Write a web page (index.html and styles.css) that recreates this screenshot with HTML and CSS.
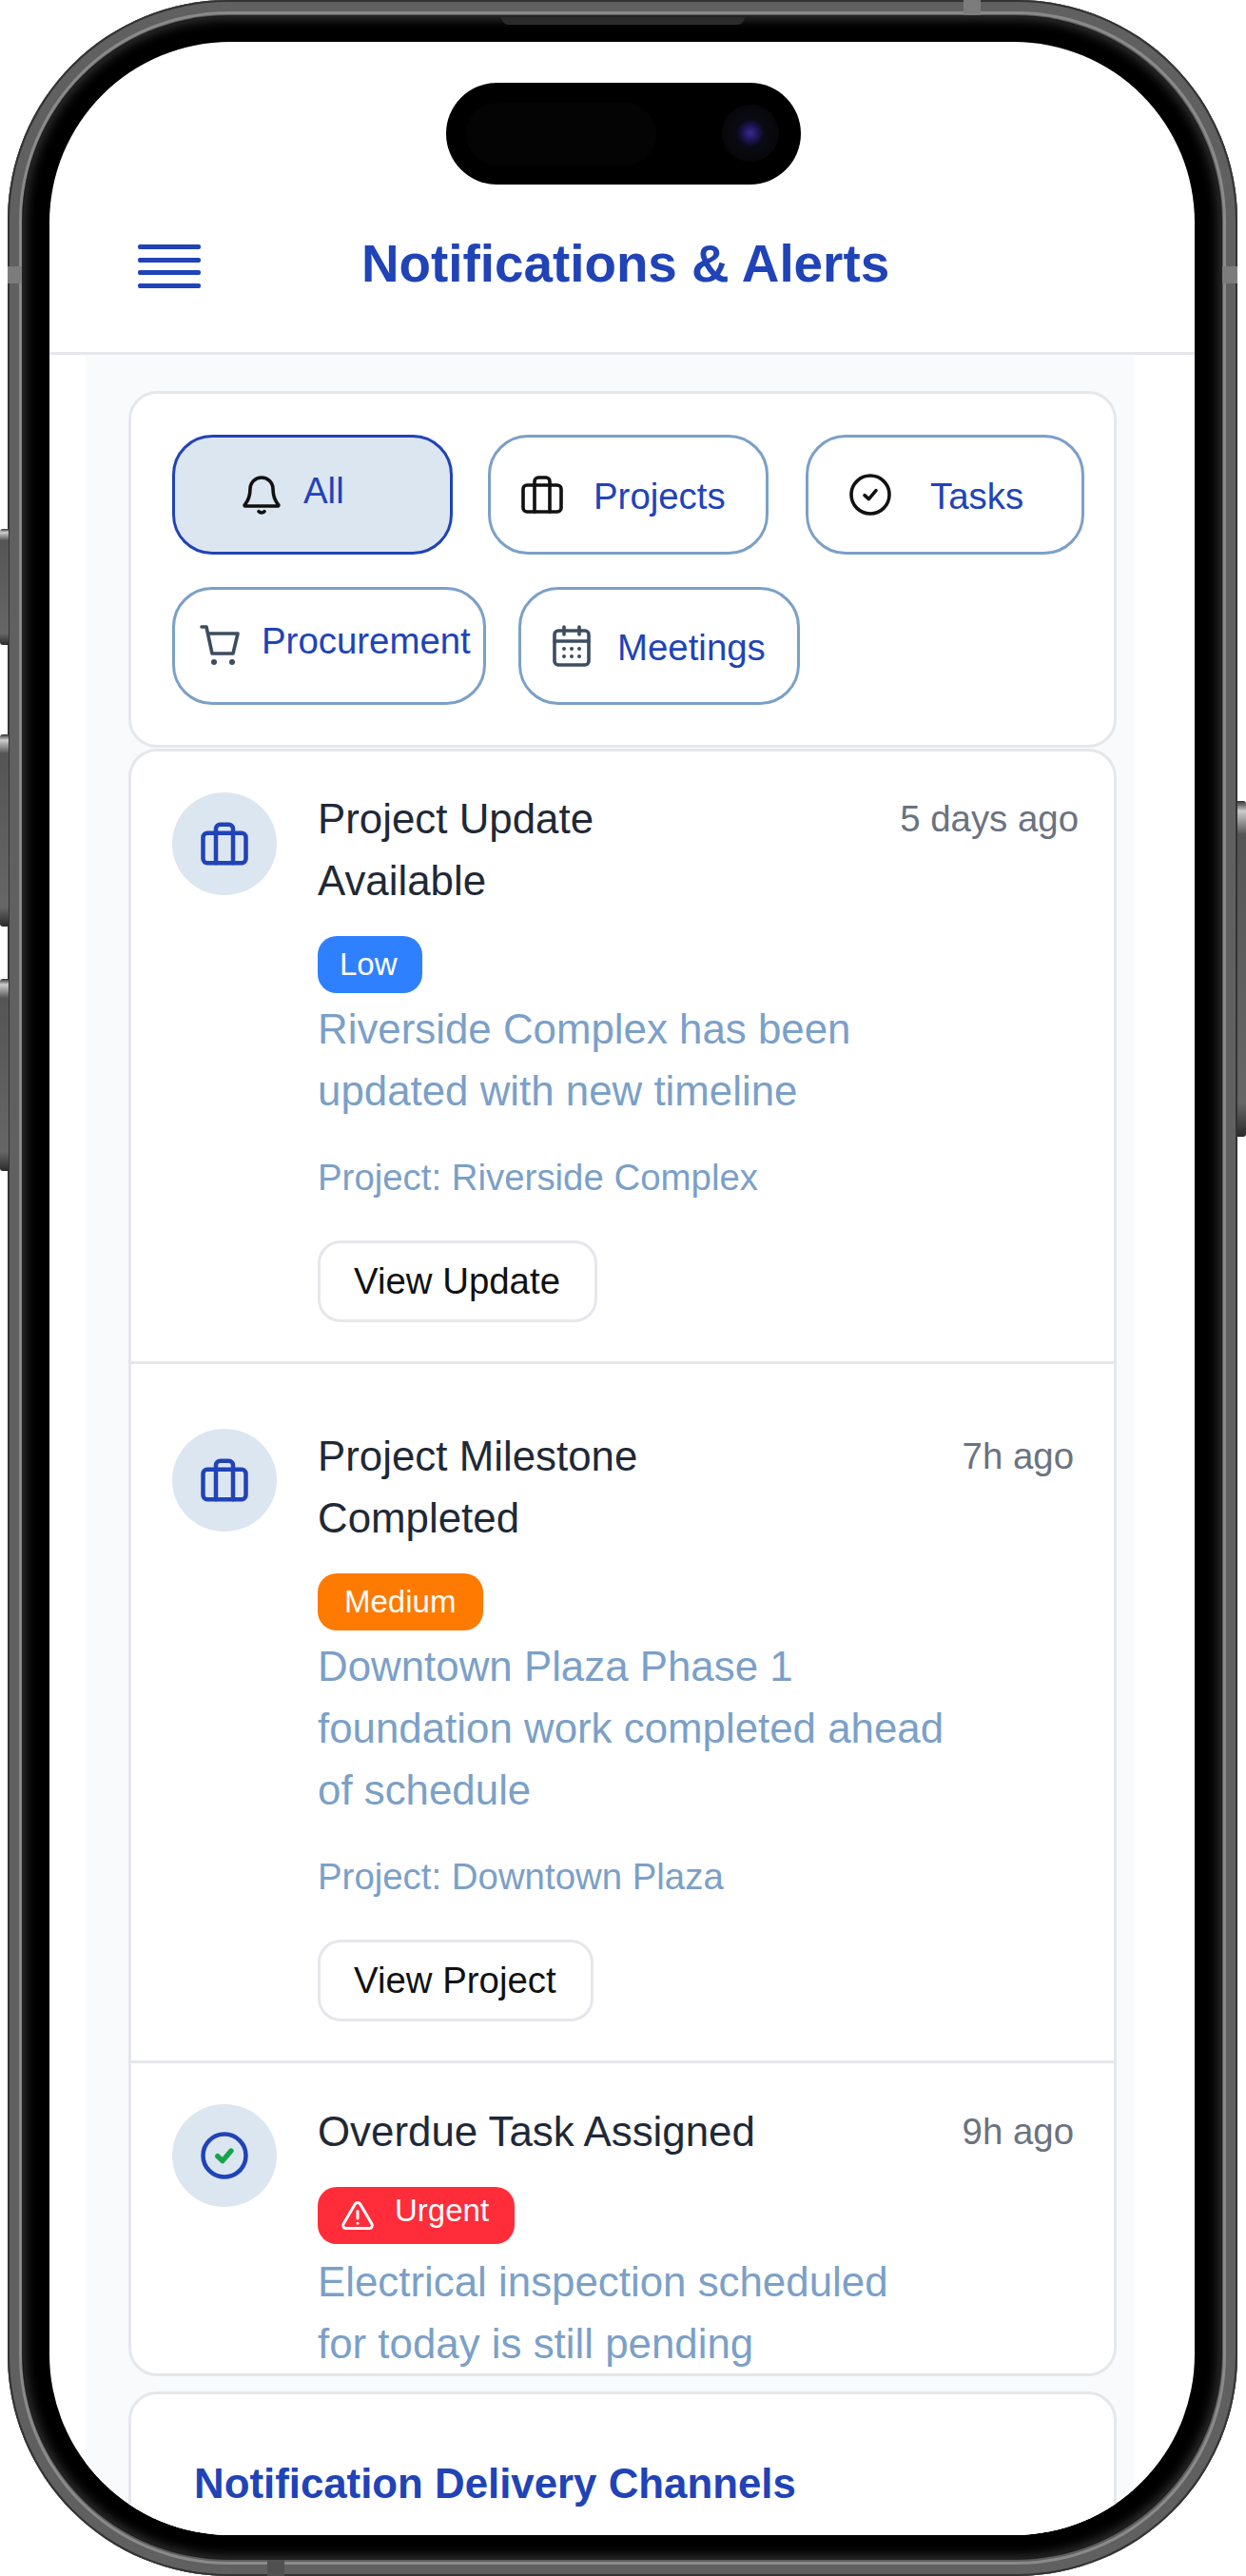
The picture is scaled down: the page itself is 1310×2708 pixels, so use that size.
FILE: index.html
```html
<!DOCTYPE html>
<html lang="en">
<head>
  <meta charset="UTF-8">
  <title>Notifications &amp; Alerts</title>
  <link rel="stylesheet" href="styles.css">
</head>
<body>
  <div class="phone">
    <span class="side-btn side-btn-mute"></span>
    <span class="side-btn side-btn-up"></span>
    <span class="side-btn side-btn-down"></span>
    <span class="side-btn side-btn-power"></span>
    <span class="band band-top"></span>
    <span class="band band-left"></span>
    <span class="band band-right"></span>
    <span class="band band-bottom"></span>

    <div class="bezel">
      <span class="speaker"></span>
      <div class="screen">
        <div class="island">
          <span class="island-sensor"></span>
          <span class="island-camera"></span>
        </div>

        <header class="app-header">
          <div class="hamburger"><span></span><span></span><span></span><span></span></div>
          <h1>Notifications &amp; Alerts</h1>
        </header>

        <main class="content">
          <section class="card filters">
            <button class="tab tab-active tab-all">
              <svg class="tab-icon" viewBox="0 0 24 24"><path d="M6 9a6 6 0 0 1 12 0c0 4.500 1.300 6.500 2.800 8.300a.4.400 0 0 1-.3.700H3.500a.4.400 0 0 1-.3-.7C4.700 15.500 6 13.500 6 9z"/><path d="M10.500 20.800a1.900 1.900 0 0 0 3 0"/></svg>
              <span class="tab-label tab-label-raised">All</span>
            </button>
            <button class="tab tab-projects">
              <svg class="tab-icon" viewBox="0 0 24 24"><rect x="2" y="7" width="20" height="14" rx="2"/><path d="M8 21V5a2 2 0 0 1 2-2h4a2 2 0 0 1 2 2v16"/></svg>
              <span class="tab-label">Projects</span>
            </button>
            <button class="tab tab-tasks">
              <svg class="tab-icon" viewBox="0 0 24 24"><circle cx="12" cy="12" r="10"/><path d="M9 12.300l2.200 2 3.800-4.500"/></svg>
              <span class="tab-label">Tasks</span>
            </button>
            <button class="tab tab-procurement">
              <svg class="tab-icon tab-icon-slate" viewBox="0 0 24 24"><path d="M2 2h2.500l3 14h11l2.500-10.500H5.300"/><circle cx="8.500" cy="20.500" r="1.500" class="dot"/><circle cx="18" cy="20.500" r="1.500" class="dot"/></svg>
              <span class="tab-label tab-label-raised">Procurement</span>
            </button>
            <button class="tab tab-meetings">
              <svg class="tab-icon tab-icon-slate" viewBox="0 0 24 24"><rect x="3" y="4" width="18" height="18" rx="2"/><path d="M8 2v4M16 2v4M3 9.500h18"/><path class="dots" d="M8 13.500h.01M12 13.500h.01M16 13.500h.01M8 17.500h.01M12 17.500h.01M16 17.500h.01"/></svg>
              <span class="tab-label">Meetings</span>
            </button>
          </section>

          <section class="card notifications">
            <article class="item item-first">
              <div class="item-icon">
                <svg viewBox="0 0 24 24"><rect x="2" y="7" width="20" height="14" rx="2"/><path d="M8 21V5a2 2 0 0 1 2-2h4a2 2 0 0 1 2 2v16"/></svg>
              </div>
              <div class="item-body">
                <div class="item-head">
                  <h3 class="item-title">Project Update<br>Available</h3>
                  <span class="item-time">5 days ago</span>
                </div>
                <span class="badge badge-low">Low</span>
                <p class="item-desc">Riverside Complex has been<br>updated with new timeline</p>
                <p class="item-meta">Project: Riverside Complex</p>
                <button class="item-btn">View Update</button>
              </div>
            </article>

            <article class="item item-second">
              <div class="item-icon">
                <svg viewBox="0 0 24 24"><rect x="2" y="7" width="20" height="14" rx="2"/><path d="M8 21V5a2 2 0 0 1 2-2h4a2 2 0 0 1 2 2v16"/></svg>
              </div>
              <div class="item-body">
                <div class="item-head">
                  <h3 class="item-title">Project Milestone<br>Completed</h3>
                  <span class="item-time">7h ago</span>
                </div>
                <span class="badge badge-medium">Medium</span>
                <p class="item-desc">Downtown Plaza Phase 1<br>foundation work completed ahead<br>of schedule</p>
                <p class="item-meta">Project: Downtown Plaza</p>
                <button class="item-btn">View Project</button>
              </div>
            </article>

            <article class="item item-third">
              <div class="item-icon">
                <svg viewBox="0 0 24 24"><circle cx="12" cy="12" r="10"/><path class="check-green" d="M8.800 12.300l2.300 2.200 4-4.700"/></svg>
              </div>
              <div class="item-body">
                <div class="item-head">
                  <h3 class="item-title">Overdue Task Assigned</h3>
                  <span class="item-time">9h ago</span>
                </div>
                <span class="badge badge-urgent">
                  <svg viewBox="0 0 24 24"><path d="M10.300 3.900L2 18a2 2 0 0 0 1.700 3h16.600a2 2 0 0 0 1.700-3L13.700 3.900a2 2 0 0 0-3.400 0z"/><path d="M12 9v5M12 17.500h.01"/></svg>
                  <span class="badge-raised">Urgent</span>
                </span>
                <p class="item-desc">Electrical inspection scheduled<br>for today is still pending</p>
              </div>
            </article>
          </section>

          <section class="card channels">
            <h2>Notification Delivery Channels</h2>
          </section>
        </main>
      </div>
    </div>
  </div>
</body>
</html>
```

FILE: styles.css
```css
:root {
  --blue: #2043b8;
  --soft-blue: #7ba0c8;
  --pale: #dce6f0;
  --line: #e5e7eb;
}

* { box-sizing: border-box; }

body {
  margin: 0;
  background: white;
  font-family: 'Liberation Sans', Arial, sans-serif;
}

/* phone frame */
.phone {
  position: relative;
  width: 1293px;
  height: 2708px;
  margin-left: 8px;
  padding: 17px 17px 18px 16px;
  border-radius: 232px;
  background: #5e5e5e;
  box-shadow: inset 0 0 0 2px #333, inset 0 0 0 12px #606060, inset 0 0 0 15px #8a8a8a;
}
.bezel {
  position: relative;
  height: 100%;
  padding: 27px 28px 25px 28px;
  border-radius: 216px;
  background: black;
  box-shadow: 0 0 0 1px #222, inset 0 0 12px 3px #333;
}
.speaker {
  position: absolute;
  top: 1px;
  left: 503px;
  width: 256px;
  height: 8px;
  border-radius: 0 0 8px 8px;
  background: #2b2b2b;
}
.side-btn {
  position: absolute;
  width: 9px;
  border-radius: 3px 0 0 3px;
  background: linear-gradient(to bottom, #333, #ccc 3%, #555 10%, #666 90%, #2a2a2a);
}
.side-btn-mute { left: -8px; top: 556px; height: 122px; }
.side-btn-up { left: -8px; top: 772px; height: 202px; }
.side-btn-down { left: -8px; top: 1029px; height: 202px; }
.side-btn-power { right: -9px; top: 842px; height: 353px; border-radius: 0 3px 3px 0; }
.band { position: absolute; background: #7c7c7c; }
.band-top { left: 1005px; top: 0; width: 18px; height: 17px; }
.band-left { left: 0; top: 280px; width: 16px; height: 18px; }
.band-right { right: 0; top: 280px; width: 17px; height: 18px; }
.band-bottom { left: 273px; bottom: 0; width: 18px; height: 18px; background: #505050; }

.screen {
  position: relative;
  height: 100%;
  overflow: hidden;
  border-radius: 190px;
  background: white;
}
.island {
  position: absolute;
  top: 43px;
  left: 417px;
  width: 373px;
  height: 107px;
  border-radius: 54px;
  background: black;
}
.island-sensor {
  position: absolute;
  top: 21px;
  left: 21px;
  width: 200px;
  height: 66px;
  border-radius: 33px;
  background: #040404;
}
.island-camera {
  position: absolute;
  top: 23px;
  left: 290px;
  width: 60px;
  height: 60px;
  border-radius: 50%;
  background: radial-gradient(circle, #3a2a8a 0, #1a1450 20%, #0a0a14 34%, #07070a 70%, black 100%);
}

/* header */
.app-header {
  display: flex;
  align-items: center;
  gap: 169px;
  height: 329px;
  padding: 190px 0 44px 93px;
  border-bottom: 3px solid var(--line);
}
.hamburger {
  display: flex;
  flex-direction: column;
  gap: 8.500px;
  width: 66px;
}
.hamburger span {
  height: 5px;
  border-radius: 2px;
  background: var(--blue);
}
h1 {
  margin: 0 0 7px;
  font-size: 54.800px;
  line-height: 76px;
  font-weight: 700;
  color: var(--blue);
}

.content {
  width: 1102px;
  margin-left: 38px;
  padding: 38px 0 0 45px;
  background: #f8fafc;
}
.card {
  width: 1039px;
  border: 3px solid var(--line);
  border-radius: 30px;
  background: white;
}

/* filter tabs */
.filters {
  display: flex;
  flex-wrap: wrap;
  align-content: flex-start;
  gap: 34px;
  height: 375px;
  padding: 43px 0 0 43px;
}
.tab {
  display: flex;
  align-items: center;
  height: 126px;
  border: 3px solid var(--soft-blue);
  border-radius: 42px;
  background: white;
  color: var(--blue);
  font-family: inherit;
  font-size: 38.400px;
}
.tab-active {
  border-color: var(--blue);
  background: var(--pale);
}
.tab-icon {
  flex: none;
  width: 48px;
  height: 48px;
  fill: none;
  stroke: #111;
  stroke-width: 1.800;
  stroke-linecap: round;
  stroke-linejoin: round;
}
.tab-icon-slate { stroke: #3d4d60; }
.tab-icon .dot { fill: #3d4d60; stroke: none; }
.tab-icon .dots { stroke-width: 2; }
.tab-label { margin-top: 4px; }
.tab-label-raised { margin-top: 0; margin-bottom: 8px; }
.tab-all { width: 295px; padding: 0 0 0 67px; gap: 20px; }
.tab-projects { width: 295px; margin-left: 3px; padding: 0 0 0 30px; gap: 30px; }
.tab-tasks { width: 293px; margin-left: 5px; padding: 0 0 0 41px; gap: 39px; }
.tab-procurement { width: 330px; height: 124px; padding: 0 0 0 24px; gap: 19px; }
.tab-procurement .tab-label-raised { margin-bottom: 10px; }
.tab-meetings { width: 296px; height: 124px; padding: 0 0 0 29px; gap: 24px; }

/* notification list */
.notifications {
  height: 1711px;
  margin-top: 1px;
  overflow: hidden;
}
.item {
  display: flex;
  gap: 43px;
  padding: 38px 37px 41px 43px;
  border-bottom: 3px solid var(--line);
}
.item-second { padding: 64px 42px 41px 43px; }
.item-third { padding: 39px 42px 0 43px; border-bottom: none; }
.item-icon {
  display: flex;
  flex: none;
  align-items: center;
  justify-content: center;
  width: 110px;
  height: 108px;
  margin-top: 4px;
  border-radius: 50%;
  background: var(--pale);
}
.item-first .item-icon { margin-top: 5px; }
.item-icon svg {
  width: 54px;
  height: 54px;
  fill: none;
  stroke: var(--blue);
  stroke-width: 2;
  stroke-linecap: round;
  stroke-linejoin: round;
}
.item-icon .check-green { stroke: #16a34a; stroke-width: 2.400; }
.item-body { flex: 1; min-width: 0; }
.item-head {
  display: flex;
  justify-content: space-between;
  align-items: flex-start;
}
.item-title {
  margin: 0;
  font-size: 43.850px;
  line-height: 65px;
  font-weight: 400;
  color: #1f2937;
}
.item-time {
  font-size: 38.400px;
  line-height: 65px;
  color: #6b7280;
}
.badge {
  display: inline-flex;
  align-items: center;
  height: 60px;
  margin-top: 26px;
  border-radius: 20px;
  font-size: 33px;
  color: white;
}
.badge svg {
  width: 36px;
  height: 36px;
  fill: none;
  stroke: white;
  stroke-width: 2;
  stroke-linecap: round;
  stroke-linejoin: round;
}
.badge-raised { margin-bottom: 10px; }
.badge-low { padding: 0 26px 0 23px; background: #2f80ff; }
.badge-medium { padding: 0 29px 0 28px; background: #ff7a00; }
.badge-urgent { gap: 21px; padding: 0 27px 0 24px; background: #ff2d3a; }
.item-desc {
  margin: 5px 0 0;
  font-size: 43.850px;
  line-height: 65px;
  color: var(--soft-blue);
}
.item-third .item-desc { margin-top: 7px; }
.item-meta {
  margin: 32px 0 39px;
  font-size: 38.400px;
  line-height: 54px;
  color: var(--soft-blue);
}
.item-btn {
  display: block;
  height: 86px;
  padding: 0 36px 0 35px;
  border: 3px solid var(--line);
  border-radius: 24px;
  background: white;
  color: #111;
  font-family: inherit;
  font-size: 38.400px;
}

.channels {
  height: 300px;
  margin-top: 16px;
  padding: 61px 0 0 66px;
}
h2 {
  margin: 0;
  font-size: 43.800px;
  line-height: 65px;
  font-weight: 700;
  color: var(--blue);
}
```
